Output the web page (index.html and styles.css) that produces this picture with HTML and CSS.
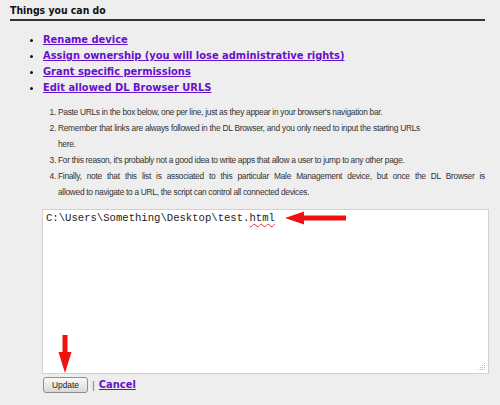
FILE: index.html
```html
<!DOCTYPE html>
<html>
<head>
<meta charset="utf-8">
<link rel="stylesheet" href="styles.css">
</head>
<body>
<div class="panel">
  <h2 class="title">Things you can do</h2>
  <ul class="actions">
    <li><a href="#">Rename device</a></li>
    <li><a href="#">Assign ownership (you will lose administrative rights)</a></li>
    <li><a href="#">Grant specific permissions</a></li>
    <li><a href="#">Edit allowed DL Browser URLS</a></li>
  </ul>
  <ol class="notes">
    <li>Paste URLs in the box below, one per line, just as they appear in your browser's navigation bar.</li>
    <li><span class="jline narrow">Remember that links are always followed in the DL Browser, and you only need to input the starting URLs</span>here.</li>
    <li>For this reason, it's probably not a good idea to write apps that allow a user to jump to any other page.</li>
    <li><span class="jline">Finally, note that this list is associated to this particular Male Management device, but once the DL Browser is</span>allowed to navigate to a URL, the script can control all connected devices.</li>
  </ol>
  <div class="editor">
    <div class="urlbox">C:\Users\Something\Desktop\test.<span class="typo">html</span></div>
    <svg class="grip" width="8" height="8" viewBox="0 0 8 8"><g fill="#b8b8b8"><rect x="6" y="0" width="1" height="1"/><rect x="4" y="2" width="1" height="1"/><rect x="6" y="2" width="1" height="1"/><rect x="2" y="4" width="1" height="1"/><rect x="4" y="4" width="1" height="1"/><rect x="6" y="4" width="1" height="1"/><rect x="0" y="6" width="1" height="1"/><rect x="2" y="6" width="1" height="1"/><rect x="4" y="6" width="1" height="1"/><rect x="6" y="6" width="1" height="1"/></g></svg>
    <svg class="arrow-left" width="62" height="14" viewBox="0 0 62 14"><polygon points="0,7 19,0.5 19,4.5 61,4.5 61,9.5 19,9.5 19,13.5" fill="#f01212"/></svg>
    <svg class="arrow-down" width="14" height="38" viewBox="0 0 14 38"><polygon points="4.5,0 9.5,0 9.5,17 13.5,17 7,38 0.5,17 4.5,17" fill="#f01212"/></svg>
  </div>
  <div class="buttons">
    <button class="btn" type="button">Update</button>
    <span class="sep">|</span>
    <a href="#" class="cancel">Cancel</a>
  </div>
</div>
</body>
</html>
```
FILE: styles.css
```css
html, body {
  margin: 0;
  padding: 0;
  background: #eeeeee;
}
.panel {
  width: 475px;
  padding: 4px 0 0 10px;
}
.title {
  margin: 0;
  font-family: "DejaVu Sans Condensed", "DejaVu Sans", sans-serif;
  font-weight: bold;
  font-size: 10.4px;
  line-height: 13px;
  color: #111;
  padding-bottom: 2px;
  border-bottom: 2px solid #333;
}
.actions {
  margin: 11px 0 0 0;
  padding-left: 33px;
  font-family: "DejaVu Sans Condensed", "DejaVu Sans", sans-serif;
  font-weight: bold;
  font-size: 11px;
  line-height: 16px;
  color: #111;
}
.actions a, .cancel {
  color: #6611cc;
  text-decoration: underline;
}
.notes {
  margin: 8px 0 0 0;
  padding-left: 48px;
  font-family: "Liberation Sans", Arial, sans-serif;
  font-size: 8.4px;
  letter-spacing: -0.3px;
  line-height: 16px;
  color: #333;
}
.jline {
  display: block;
  text-align: justify;
  text-align-last: justify;
}
.narrow {
  width: 362px;
}
.editor {
  position: relative;
  margin: 9px 0 0 32px;
  width: 447px;
}
.urlbox {
  box-sizing: border-box;
  height: 165px;
  background: #fff;
  border: 1px solid #d2d2d2;
  padding: 2px 3px;
  font-family: "Liberation Mono", "Courier New", monospace;
  font-size: 10.6px;
  line-height: 13px;
  color: #222;
}
.typo {
  text-decoration: underline wavy #e03030;
  text-decoration-thickness: 1px;
  text-underline-offset: 2px;
}
.grip {
  position: absolute;
  right: 3px;
  bottom: 3px;
}
.arrow-left {
  position: absolute;
  left: 243px;
  top: 2px;
}
.arrow-down {
  position: absolute;
  left: 16px;
  top: 126px;
}
.buttons {
  display: flex;
  align-items: center;
  gap: 4px;
  margin: 2px 0 0 33px;
  height: 17px;
}
.btn {
  box-sizing: border-box;
  width: 45px;
  height: 16px;
  padding: 0;
  border: 1px solid #8f8f8f;
  border-radius: 3px;
  background: linear-gradient(#fafafa, #d8d8d8);
  font-family: "Liberation Sans", Arial, sans-serif;
  font-size: 8.4px;
  color: #222;
}
.sep {
  font-family: "Liberation Sans", Arial, sans-serif;
  font-size: 11px;
  color: #777;
}
.cancel {
  font-family: "DejaVu Sans Condensed", "DejaVu Sans", sans-serif;
  font-weight: bold;
  font-size: 11px;
  line-height: 16px;
}
```
